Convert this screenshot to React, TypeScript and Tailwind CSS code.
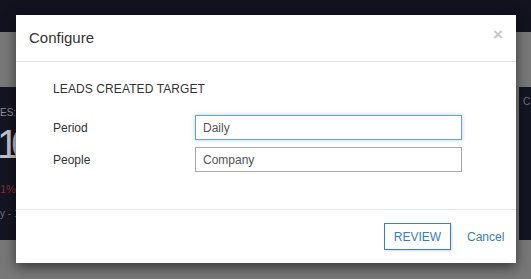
import React from "react";

export default function App() {
  return (
    <div className="relative h-[279px] w-[531px] overflow-hidden bg-[#787878] font-['Liberation_Sans',Arial,sans-serif]">
      {/* Page behind the backdrop */}
      <div className="h-[32px] bg-[#12131e]" />
      <div className="flex justify-between pt-[55px]">
        <div className="flex h-[153px] w-[240px] flex-col bg-[#141522] pt-[20px]">
          <span className="text-[10px] leading-[12px] text-[#8c8e9a]">ES: TARGET</span>
          <span className="-ml-[3px] mt-[5px] text-[40px] leading-[40px] tracking-[-8px] text-[#c4c4c8]">10</span>
          <span className="mt-[18px] text-[11px] leading-[14px] text-[#8a2a2e]">1%</span>
          <span className="mt-[12px] text-[10px] leading-[12px] text-[#6f717c]">y - 1 day</span>
        </div>
        <div className="flex h-[153px] w-[12px] flex-col bg-[#141522] pl-[4px] pt-[9px]">
          <span className="text-[10px] leading-[12px] text-[#6f717c]">C</span>
        </div>
      </div>

      {/* Modal */}
      <div className="absolute left-[16px] top-[15px] flex h-[248px] w-[500px] flex-col bg-white shadow-[0_4px_12px_rgba(0,0,0,0.55)]">
        <div className="flex h-[47px] shrink-0 items-start justify-between border-b border-[#e5e5e5] px-[13px]">
          <h4 className="mt-[14px] text-[15px] leading-[18px] text-[#333]">Configure</h4>
          <button className="mt-[11px] text-[17px] font-bold leading-[17px] text-[#c8c8c8]">×</button>
        </div>

        <div className="h-[147px] shrink-0 pl-[37px] pt-[19px]">
          <p className="text-[12px] leading-[17px] tracking-[0.1px] text-[#333]">LEADS CREATED TARGET</p>
          <div className="mt-[17px] flex flex-col gap-[7px]">
            <div className="flex items-center">
              <label className="w-[142px] text-[12px] text-[#333]">Period</label>
              <input
                readOnly
                value="Daily"
                className="h-[25px] w-[267px] border border-[#6c9fdc] px-[7px] text-[12px] text-[#555] shadow-[0_0_4px_rgba(102,175,233,0.55)] outline-none"
              />
            </div>
            <div className="flex items-center">
              <label className="w-[142px] text-[12px] text-[#333]">People</label>
              <input
                readOnly
                value="Company"
                className="h-[25px] w-[267px] border border-[#a8a8a8] px-[7px] text-[12px] text-[#555] outline-none"
              />
            </div>
          </div>
        </div>

        <div className="flex h-[54px] shrink-0 items-center justify-end gap-[16px] border-t border-[#e5e5e5] pr-[13px]">
          <button className="h-[27px] w-[67px] border border-[#3b7dc0] text-[12px] text-[#3b7dc0] shadow-[1px_1px_2px_rgba(0,0,0,0.15)]">
            REVIEW
          </button>
          <a className="w-[36px] text-[12px] text-[#3b7dc0]">Cancel</a>
        </div>
      </div>
    </div>
  );
}
